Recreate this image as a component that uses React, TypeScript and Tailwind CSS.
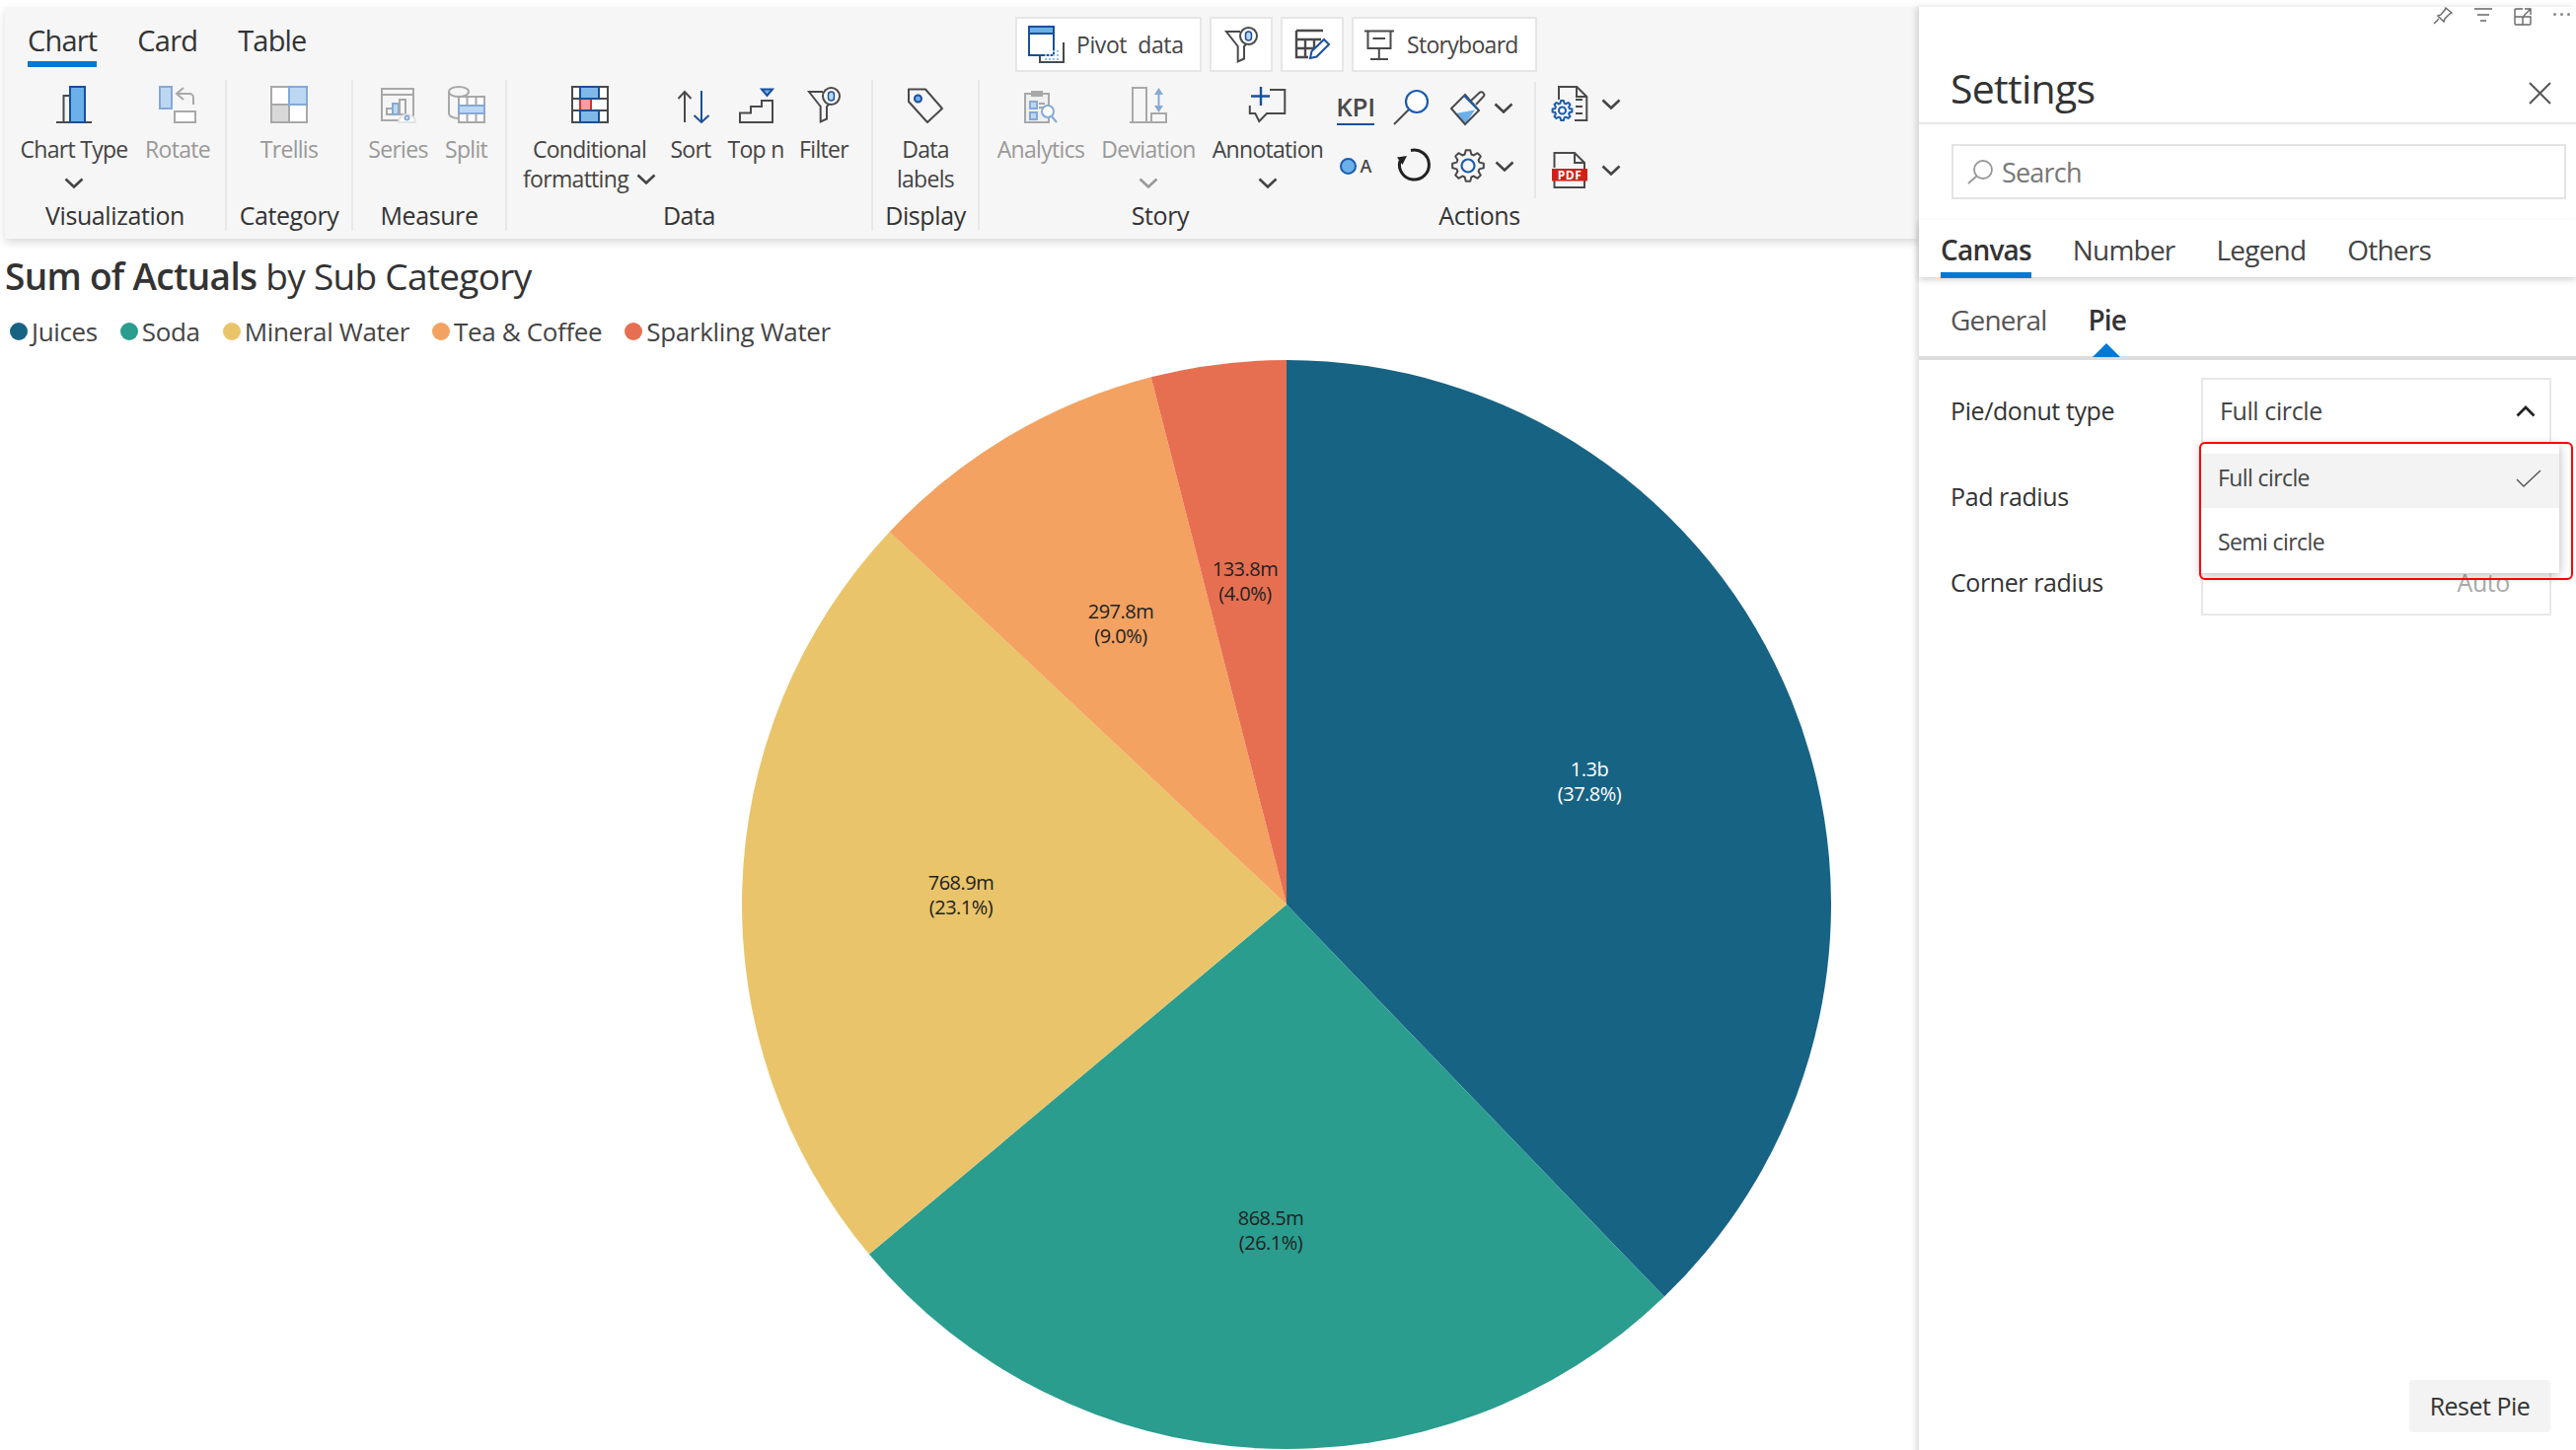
import type { ReactNode } from "react"

const B = "#1a4f9c"
const L = "#6cb0ea"
const G = "#4a4a4a"
const D = "#a8a8a8"
const DB = "#86a9d6"
const DL = "#bbd7f2"

function Ico({ w, h, children }: { w: number; h: number; children: ReactNode }) {
  return (
    <svg width={w} height={h} viewBox={`0 0 ${w} ${h}`} fill="none" strokeWidth="2" className="block shrink-0 overflow-visible">
      {children}
    </svg>
  )
}

function gearPath(cx: number, cy: number, r: number, rIn: number, teeth = 8) {
  const pts: string[] = []
  for (let i = 0; i < teeth; i++) {
    const a = (i / teeth) * Math.PI * 2
    const s = (Math.PI * 2) / teeth
    const add = (ang: number, rad: number) =>
      pts.push(`${(cx + Math.sin(ang) * rad).toFixed(2)} ${(cy - Math.cos(ang) * rad).toFixed(2)}`)
    add(a - s * 0.36, rIn)
    add(a - s * 0.18, r)
    add(a + s * 0.18, r)
    add(a + s * 0.36, rIn)
  }
  return "M" + pts.join("L") + "Z"
}

function Chevron({ color = "#444" }: { color?: string }) {
  return (
    <svg width="20" height="11" viewBox="0 0 20 11" fill="none" className="block shrink-0">
      <path d="M1.5 1.5l8.5 8 8.5-8" stroke={color} strokeWidth="2.6" />
    </svg>
  )
}

const ChartTypeIcon = () => (
  <Ico w={38} h={38}>
    <path d="M1 37H37" stroke={G} />
    <path d="M15 10H8.5V37" stroke={G} />
    <rect x="15" y="1" width="15" height="36" fill={L} stroke={B} />
  </Ico>
)
const RotateIcon = () => (
  <Ico w={38} h={38}>
    <rect x="1" y="1" width="12" height="22" fill={DL} stroke={DB} />
    <path d="M35 19V12a4 4 0 0 0-4-4H19M25 2l-7 6 7 6" stroke={D} />
    <rect x="16" y="26" width="21" height="11" fill="#fff" stroke={D} />
  </Ico>
)
const TrellisIcon = () => (
  <Ico w={38} h={38}>
    <rect x="1" y="1" width="18" height="18" fill="#fff" stroke={D} />
    <rect x="1" y="19" width="18" height="18" fill="#d8d8d8" stroke={D} />
    <rect x="19" y="19" width="18" height="18" fill="#fff" stroke={D} />
    <rect x="19" y="1" width="18" height="18" fill={DL} stroke={DB} />
  </Ico>
)
const SeriesIcon = () => (
  <Ico w={35} h={36}>
    <rect x="1" y="1" width="32" height="32" stroke={D} />
    <path d="M1 7H33" stroke={D} />
    <rect x="6" y="21" width="6" height="6" stroke={D} />
    <rect x="12" y="16" width="6" height="11" fill={DL} stroke={DB} />
    <rect x="19" y="12" width="6" height="15" stroke={D} />
    <path d="M18 35a8.5 8 0 0 1 17 0Z" fill="#fff" stroke="#e4e4e4" />
    <circle cx="26.5" cy="30.5" r="2" fill="#fff" stroke={DB} />
  </Ico>
)
const SplitIcon = () => (
  <Ico w={38} h={38}>
    <ellipse cx="11" cy="6" rx="10" ry="5" stroke={D} />
    <path d="M1 6V28c0 2.5 4 4.5 9 5" stroke={D} />
    <rect x="11" y="11" width="26" height="26" fill="#fff" stroke={D} />
    <rect x="11" y="20" width="26" height="8" fill={DL} stroke={DB} />
    <path d="M19.5 11V20M28.5 11V20M19.5 28V37M28.5 28V37" stroke={D} />
  </Ico>
)
const CondIcon = () => (
  <Ico w={38} h={38}>
    <rect x="1" y="1" width="36" height="36" fill="#fff" stroke={G} />
    <path d="M1 13H37M1 25H37" stroke={G} />
    <rect x="9" y="13" width="11" height="12" fill="#ff9c9c" />
    <path d="M9 13V25M20 13V25" stroke="#d93025" />
    <rect x="9" y="1" width="19" height="12" fill="#7fb9ea" stroke={B} />
    <rect x="9" y="25" width="19" height="12" fill="#7fb9ea" stroke={B} />
  </Ico>
)
const SortIcon = () => (
  <Ico w={34} h={34}>
    <g transform="translate(4 0)">
      <path d="M7 33V2M0.5 9L7 2l6.5 7" stroke={G} />
      <path d="M24 1V33M16.5 26l7.5 7 7.5-7" stroke={B} />
    </g>
  </Ico>
)
const TopNIcon = () => (
  <Ico w={35} h={36}>
    <path d="M1 35V25.5H12V19H23V13H34V35Z" stroke={G} />
    <path d="M23 1.5H34L28.5 8Z" fill={L} stroke={B} />
  </Ico>
)
const FilterIcon = () => (
  <Ico w={33} h={37}>
    <path d="M15 5H1L12.7 20V35.5L19 32.5V20L24 14" stroke={G} />
    <circle cx="23.5" cy="9.5" r="8.5" fill="#fff" stroke={G} />
    <rect x="20.5" y="5" width="6" height="9" rx="3" fill={DL} stroke={B} strokeWidth="1.5" />
  </Ico>
)
const TagIcon = () => (
  <Ico w={36} h={36}>
    <path d="M1 1.5H18L35 21L20 35L1 14Z" stroke={G} strokeLinejoin="round" />
    <circle cx="10.5" cy="11" r="3.5" fill={L} stroke={B} />
  </Ico>
)
const PivotIcon = () => (
  <Ico w={38} h={38}>
    <path d="M12 30V37H36V17" stroke={G} />
    <rect x="1" y="1" width="25" height="29" fill="#fff" stroke={B} />
    <rect x="1" y="1" width="25" height="7" fill={L} stroke={B} />
    {[17, 21, 25, 29].map((x) =>
      [33, 29, 25].map((y) => (y < 27 && x < 25 ? null : <rect key={`${x}-${y}`} x={x} y={y} width="2" height="2" fill="#8ec1ee" />)),
    )}
  </Ico>
)
const EditTableIcon = () => (
  <Ico w={35} h={32}>
    <path d="M1 2H28M1 2V29H13M1 11H26M1 20H20M10 11V29M19 11V22" stroke={G} strokeWidth="2.4" />
    <path d="M15 30l1.5-7L29 11l5 5L21.5 28.5Z" fill="#fff" stroke={B} />
  </Ico>
)
const StoryIcon = () => (
  <Ico w={30} h={31}>
    <path d="M0 1.5H30M3.5 1.5V19H26.5V1.5M8.5 9H21M14.8 19V30M6 30H24" stroke={G} />
  </Ico>
)
const AnalyticsIcon = () => (
  <Ico w={34} h={33}>
    <rect x="1" y="3" width="24" height="29" fill="#efefef" stroke={D} />
    <rect x="7" y="0" width="12" height="6" fill={D} />
    <rect x="6" y="11" width="7" height="7" fill={DL} stroke={DB} />
    <rect x="6" y="22" width="7" height="7" fill={DL} stroke={DB} />
    <path d="M15 13H21M15 17H19" stroke={D} />
    <circle cx="24" cy="21" r="6" fill="#fff" stroke={DB} />
    <path d="M28 26l5 6" stroke={DB} />
  </Ico>
)
const DeviationIcon = () => (
  <Ico w={38} h={37}>
    <path d="M3 36V1H17V36" stroke={D} />
    <rect x="22" y="27" width="15" height="9" stroke={D} />
    <path d="M0 36H38" stroke={D} />
    <path d="M29.5 6V20" stroke={DB} />
    <path d="M29.5 1L25 8H34ZM29.5 26L25 19H34Z" fill={DB} />
  </Ico>
)
const AnnotationIcon = () => (
  <Ico w={38} h={37}>
    <path d="M21 3H36.3V27H18L10.3 35L6.3 27H0.8V19" stroke={G} />
    <path d="M2 9.5H21M12 0V19" stroke={B} strokeWidth="2.4" />
  </Ico>
)
const MagnifierIcon = () => (
  <Ico w={36} h={37}>
    <path d="M16 20L1 35" stroke={G} />
    <circle cx="24" cy="12" r="11" fill="#fff" stroke="#1a5cad" strokeWidth="2.2" />
  </Ico>
)
const BrushIcon = () => (
  <Ico w={36} h={36}>
    <path d="M5.5 24L25 20.5L15 35Z" fill={L} />
    <path d="M1 19L15 35L29 21L15 5Z" stroke={G} fill="none" />
    <path d="M14 6L28 20" stroke="#1a5cad" />
    <path d="M21 11L30 2.5a3 3 0 0 1 4 4L26 15" stroke={G} />
  </Ico>
)
const DotAIcon = () => (
  <div className="flex items-center gap-[4px]">
    <span className="w-[17px] h-[17px] rounded-full bg-[#6cb0ea] border-2 border-[#1a5cad]" />
    <span className="text-[18px] leading-none font-semibold text-[#4a4a4a]">A</span>
  </div>
)
const UndoIcon = () => (
  <Ico w={34} h={34}>
    <path d="M14 1.5A15 15 0 1 1 3 12" stroke="#222" strokeWidth="3" />
    <path d="M0 8.5L10 7L5.5 16Z" fill="#222" />
  </Ico>
)
const GearIcon = () => (
  <Ico w={34} h={34}>
    <path d={gearPath(17, 17, 16, 12)} stroke={G} strokeLinejoin="round" />
    <circle cx="17" cy="17" r="6.5" stroke="#1a5cad" strokeWidth="2.2" />
  </Ico>
)
const DocGearIcon = () => (
  <Ico w={36} h={36}>
    <path d="M7 14V1H25.3L35.3 11V35H23M25 1V11H35M24 14H31M24 21H31M24 28H31" stroke={G} />
    <path d={gearPath(10.5, 25, 10, 7.5)} fill="#f6f6f6" stroke="#1a5cad" strokeLinejoin="round" />
    <circle cx="10.5" cy="25" r="3.5" stroke="#1a5cad" />
  </Ico>
)
const PdfIcon = () => (
  <Ico w={36} h={37}>
    <path d="M2.5 16V1H23L33 11V36H2.5V29M23 1V11H33" stroke={G} />
    <rect x="0" y="17" width="36" height="12.5" fill="#d1201a" />
    <text x="18" y="27.5" textAnchor="middle" fontSize="12" fontWeight="700" fill="#fff" stroke="none" letterSpacing="0.5">
      PDF
    </text>
  </Ico>
)

function Tool({
  icon,
  label,
  width,
  disabled,
  chevron,
}: {
  icon: ReactNode
  label: string
  width: string
  disabled?: boolean
  chevron?: boolean
}) {
  return (
    <div className={`flex flex-col items-center shrink-0 ${width}`}>
      <div className="h-[38px] mt-[6px] flex items-end">{icon}</div>
      <span className={`mt-[11px] text-[23px] tracking-[-0.7px] leading-[30px] whitespace-nowrap ${disabled ? "text-[#999]" : "text-[#444]"}`}>
        {label}
      </span>
      {chevron && (
        <div className="h-[30px] mt-[4px] flex items-center">
          <Chevron color={disabled ? "#999" : "#444"} />
        </div>
      )}
    </div>
  )
}

function Group({
  label,
  width,
  children,
  border = true,
}: {
  label: string
  width: string
  children: ReactNode
  border?: boolean
}) {
  return (
    <div className={`flex flex-col h-[153px] shrink-0 ${width} ${border ? "border-r-2 border-[#e8e8e8]" : ""}`}>
      <div className="h-[122px] flex justify-center">{children}</div>
      <div className="h-[30px] text-center text-[25px] tracking-[-0.4px] leading-[30px] text-[#333]">{label}</div>
    </div>
  )
}

function Ribbon() {
  return (
    <div className="ml-[5px] mt-[7px] h-[235px] bg-[#f6f6f6] shadow-[0_4px_8px_rgba(0,0,0,0.14)] relative z-[1]">
      <div className="h-[74px] flex pl-[23px]">
        <div className="flex gap-[41px] text-[29px] tracking-[-0.8px] text-[#333]">
          <div className="flex flex-col pt-[14px]">
            <span className="leading-[40px]">Chart</span>
            <span className="h-[6px] mt-[1px] bg-[#0078d4]" />
          </div>
          <span className="pt-[14px] leading-[40px]">Card</span>
          <span className="pt-[14px] leading-[40px]">Table</span>
        </div>
        <div className="ml-auto mr-[387px] pt-[10px] flex gap-[8px] h-[66px] text-[23px] text-[#444]">
          <div className="w-[189px] border-2 border-[#e6e6e6] bg-white flex items-center pl-[11px] gap-[11px]">
            <PivotIcon />
            <span className="tracking-[-0.4px] whitespace-pre">Pivot  data</span>
          </div>
          <div className="w-[64px] border-2 border-[#e6e6e6] bg-white flex items-center justify-center">
            <FilterIcon />
          </div>
          <div className="w-[64px] border-2 border-[#e6e6e6] bg-white flex items-center justify-center">
            <EditTableIcon />
          </div>
          <div className="w-[188px] border-2 border-[#e6e6e6] bg-white flex items-center pl-[11px] gap-[13px]">
            <StoryIcon />
            <span className="tracking-[-0.7px]">Storyboard</span>
          </div>
        </div>
      </div>
      <div className="flex">
        <Group label="Visualization" width="w-[225px]">
          <div className="flex w-full pl-[10px]">
            <Tool icon={<ChartTypeIcon />} label="Chart Type" width="w-[120px]" chevron />
            <Tool icon={<RotateIcon />} label="Rotate" width="w-[90px]" disabled />
          </div>
        </Group>
        <Group label="Category" width="w-[128px]">
          <Tool icon={<TrellisIcon />} label="Trellis" width="w-[80px]" disabled />
        </Group>
        <Group label="Measure" width="w-[156px]">
          <div className="flex pl-[6px]">
            <Tool icon={<SeriesIcon />} label="Series" width="w-[69px]" disabled />
            <Tool icon={<SplitIcon />} label="Split" width="w-[69px]" disabled />
          </div>
        </Group>
        <Group label="Data" width="w-[371px]">
          <div className="flex w-full">
            <div className="w-[167px] flex flex-col items-center shrink-0">
              <div className="h-[38px] mt-[6px] flex items-end">
                <CondIcon />
              </div>
              <span className="mt-[11px] text-[23px] tracking-[-0.7px] leading-[30px] text-[#444]">Conditional</span>
              <div className="flex items-center gap-[8px] text-[23px] tracking-[-0.7px] leading-[30px] text-[#444]">
                formatting
                <Chevron />
              </div>
            </div>
            <Tool icon={<SortIcon />} label="Sort" width="w-[38px]" />
            <Tool icon={<TopNIcon />} label="Top n" width="w-[94px]" />
            <Tool icon={<FilterIcon />} label="Filter" width="w-[44px]" />
          </div>
        </Group>
        <Group label="Display" width="w-[108px]">
          <div className="flex flex-col items-center">
            <Tool icon={<TagIcon />} label="Data" width="w-[80px]" />
            <span className="text-[23px] tracking-[-0.7px] leading-[30px] text-[#444]">labels</span>
          </div>
        </Group>
        <Group label="Story" width="w-[366px]" border={false}>
          <div className="flex w-full">
            <Tool icon={<AnalyticsIcon />} label="Analytics" width="w-[124px]" disabled />
            <Tool icon={<DeviationIcon />} label="Deviation" width="w-[94px]" disabled chevron />
            <Tool icon={<AnnotationIcon />} label="Annotation" width="w-[148px]" chevron />
          </div>
        </Group>
        <Group label="Actions" width="w-[281px]" border={false}>
          <div className="flex w-full -ml-[10px] shrink-0">
            <div className="w-[203px] my-[2px] border-r-2 border-[#e8e8e8] shrink-0 h-[118px]">
              <div className="flex h-[52px] items-center">
                <div className="w-[40px] flex flex-col items-center pt-[2px]">
                  <span className="text-[26px] leading-[30px] font-semibold tracking-[-0.3px] text-[#4a4a4a]">KPI</span>
                  <span className="w-[38px] h-[2px] bg-[#1a4f9c] mt-[2px]" />
                </div>
                <div className="w-[76px] flex justify-center pr-[4px]">
                  <MagnifierIcon />
                </div>
                <div className="flex items-center gap-[8px]">
                  <BrushIcon />
                  <Chevron />
                </div>
              </div>
              <div className="flex h-[66px] items-center">
                <div className="w-[40px] flex justify-center">
                  <DotAIcon />
                </div>
                <div className="w-[77px] flex justify-center">
                  <UndoIcon />
                </div>
                <div className="flex items-center gap-[10px]">
                  <GearIcon />
                  <Chevron />
                </div>
              </div>
            </div>
            <div className="pl-[16px] pt-[6px] flex flex-col gap-[31px]">
              <div className="flex items-center gap-[14px]">
                <DocGearIcon />
                <Chevron />
              </div>
              <div className="flex items-center gap-[14px]">
                <PdfIcon />
                <Chevron />
              </div>
            </div>
          </div>
        </Group>
      </div>
    </div>
  )
}

const slices = [
  { name: "Juices", pct: 37.8, color: "#176384" },
  { name: "Soda", pct: 26.1, color: "#2a9d8f" },
  { name: "Mineral Water", pct: 23.1, color: "#e9c46a" },
  { name: "Tea & Coffee", pct: 9.0, color: "#f4a261" },
  { name: "Sparkling Water", pct: 4.0, color: "#e76f51" },
]

const pieLabels = [
  { x: 859, y: 415, a: "1.3b", b: "(37.8%)", fill: "#fff" },
  { x: 536, y: 870, a: "868.5m", b: "(26.1%)", fill: "#222" },
  { x: 222, y: 530, a: "768.9m", b: "(23.1%)", fill: "#222" },
  { x: 384, y: 255, a: "297.8m", b: "(9.0%)", fill: "#222" },
  { x: 510, y: 212, a: "133.8m", b: "(4.0%)", fill: "#222" },
]

function Pie() {
  const R = 552
  let acc = 0
  const paths = slices.map((s) => {
    const a0 = (acc / 100) * Math.PI * 2
    acc += s.pct
    const a1 = (acc / 100) * Math.PI * 2
    const p = (a: number) => `${(R + Math.sin(a) * R).toFixed(2)} ${(R - Math.cos(a) * R).toFixed(2)}`
    return <path key={s.name} d={`M${R} ${R}L${p(a0)}A${R} ${R} 0 ${s.pct > 50 ? 1 : 0} 1 ${p(a1)}Z`} fill={s.color} />
  })
  return (
    <svg width="1104" height="1104" viewBox="0 0 1104 1104" className="block ml-[752px] mt-[13px] shrink-0">
      {paths}
      {pieLabels.map((l) => (
        <text key={l.a} textAnchor="middle" fontSize="20" letterSpacing="-0.5" fill={l.fill}>
          <tspan x={l.x} y={l.y + 7}>
            {l.a}
          </tspan>
          <tspan x={l.x} y={l.y + 32}>
            {l.b}
          </tspan>
        </text>
      ))}
    </svg>
  )
}

function ChartArea() {
  return (
    <div className="w-[1945px] h-[1470px] shrink-0 flex flex-col overflow-hidden">
      <Ribbon />
      <h1 className="mt-[16px] pl-[5px] h-[44px] text-[37px] leading-[44px] tracking-[-0.7px] text-[#333]">
        <span className="font-semibold">Sum of Actuals</span> by Sub Category
      </h1>
      <div className="mt-[19px] mb-[1px] pl-[10px] flex gap-[23px] h-[30px] items-center text-[26px] tracking-[-0.35px] text-[#444]">
        {slices.map((s) => (
          <div key={s.name} className="flex items-center gap-[4px]">
            <span className="w-[18px] h-[18px] rounded-full" style={{ backgroundColor: s.color }} />
            <span>{s.name}</span>
          </div>
        ))}
      </div>
      <Pie />
    </div>
  )
}

function SettingsPanel() {
  return (
    <div className="flex-1 h-[1470px] flex flex-col relative z-10 bg-white shadow-[-3px_0_6px_rgba(0,0,0,0.14)] mt-[7px] text-[#333]">
      <div className="h-[55px] flex justify-end items-start gap-[22px] pr-[6px] text-[#666]">
        <svg width="20" height="18" viewBox="0 0 20 18" fill="none" stroke="#666" strokeWidth="1.4" className="mt-[0px]">
          <path d="M13 1l6 5-2 1-5 5-1 3-6-6 3-1 4-5ZM6 12l-5 5" />
        </svg>
        <svg width="18" height="14" viewBox="0 0 18 14" fill="none" stroke="#666" strokeWidth="1.6" className="mt-[1px]">
          <path d="M0 1H18M3 7H15M6 13H12" />
        </svg>
        <svg width="18" height="18" viewBox="0 0 18 18" fill="none" stroke="#666" strokeWidth="1.4" className="mt-[1px]">
          <path d="M9 1H2a1 1 0 0 0-1 1v14a1 1 0 0 0 1 1h14a1 1 0 0 0 1-1V9H9v8M1 9H9M11 1h6v6M17 1L10 8" />
        </svg>
        <div className="flex gap-[4px] mt-[6px]">
          <span className="w-[3px] h-[3px] rounded-full bg-[#888]" />
          <span className="w-[3px] h-[3px] rounded-full bg-[#888]" />
          <span className="w-[3px] h-[3px] rounded-full bg-[#888]" />
        </div>
      </div>
      <div className="h-[64px] border-b-2 border-[#e8e8e8] flex items-start justify-between pl-[32px] pr-[25px]">
        <span className="text-[41px] leading-[54px] tracking-[-0.7px] text-[#333]">Settings</span>
        <svg width="23" height="23" viewBox="0 0 23 23" fill="none" stroke="#555" strokeWidth="2" className="mt-[21px]">
          <path d="M1 1L22 22M22 1L1 22" />
        </svg>
      </div>
      <div className="mt-[20px] ml-[33px] w-[623px] h-[56px] shrink-0 border-2 border-[#e4e4e4] flex items-center pl-[14px] gap-[9px]">
        <svg width="26" height="25" viewBox="0 0 26 25" fill="none" stroke="#999" strokeWidth="1.8">
          <circle cx="16" cy="10" r="9" />
          <path d="M9.5 16.5L1 24" />
        </svg>
        <span className="text-[27px] tracking-[-0.8px] text-[#777] pt-[2px]">Search</span>
      </div>
      <div className="mt-[21px] h-[58px] shrink-0 flex items-center gap-[42px] pl-[22px] pt-[2px] text-[28px] tracking-[-0.8px] shadow-[0_3px_6px_rgba(0,0,0,0.16)] text-[#444]">
        <div className="relative font-semibold text-[#333]">
          Canvas
          <span className="absolute left-0 right-0 top-[44px] h-[6px] bg-[#0078d4]" />
        </div>
        <span>Number</span>
        <span>Legend</span>
        <span>Others</span>
      </div>
      <div className="h-[84px] shrink-0 border-b-4 border-[#ddd] flex gap-[42px] pl-[32px] pt-[23px] text-[28px] tracking-[-0.8px] text-[#555]">
        <span className="leading-[40px]">General</span>
        <div className="relative leading-[40px] font-semibold text-[#333]">
          Pie
          <span className="absolute left-[5px] top-[44px] w-0 h-0 border-x-[14px] border-x-transparent border-b-[14px] border-b-[#0078d4]" />
        </div>
      </div>
      <div className="mt-[18px] pl-[32px] flex flex-col gap-[20px] text-[25px] tracking-[-0.4px]">
        <div className="flex h-[67px]">
          <span className="w-[254px] self-center font-medium text-[#333]">Pie/donut type</span>
          <div className="relative w-[355px] border-2 border-[#e8e8e8] flex items-center justify-between pl-[17px] pr-[14px] text-[#444]">
            Full circle
            <svg width="20" height="12" viewBox="0 0 20 12" fill="none" stroke="#222" strokeWidth="2.8">
              <path d="M1.5 10.5L10 2l8.5 8.5" />
            </svg>
            <div className="absolute -left-[2px] top-[65px] w-[363px] h-[131px] bg-white shadow-[0_2px_10px_rgba(0,0,0,0.28)] z-10 pt-[10px] text-[23px] tracking-[-0.6px]">
              <div className="h-[55px] bg-[#f3f3f3] flex items-center justify-between pl-[17px] pr-[18px] pb-[6px]">
                Full circle
                <svg width="26" height="18" viewBox="0 0 26 18" fill="none" stroke="#555" strokeWidth="1.4">
                  <path d="M1 10l7 7L25 1" />
                </svg>
              </div>
              <div className="h-[55px] flex items-center pl-[17px] pt-[14px]">Semi circle</div>
            </div>
            <div className="absolute -left-[4px] top-[63px] w-[379px] h-[140px] border-2 border-[#f00] rounded-[6px] z-20" />
          </div>
        </div>
        <div className="flex h-[67px]">
          <span className="w-[254px] self-center font-medium text-[#333]">Pad radius</span>
          <div className="w-[355px] border-2 border-[#e8e8e8]" />
        </div>
        <div className="flex h-[67px]">
          <span className="w-[254px] self-center font-medium text-[#333]">Corner radius</span>
          <div className="w-[355px] border-2 border-[#e8e8e8] flex items-center justify-end pr-[40px] text-[#aaa]">Auto</div>
        </div>
      </div>
      <div className="mt-auto mb-[25px] self-end mr-[26px] w-[143px] h-[53px] rounded-[4px] bg-[#f3f3f3] flex items-center justify-center text-[25px] tracking-[-0.5px] text-[#333]">
        Reset Pie
      </div>
    </div>
  )
}

export default function App() {
  return (
    <div className="w-[2611px] h-[1470px] flex overflow-hidden bg-white font-['Open_Sans',sans-serif]">
      <ChartArea />
      <SettingsPanel />
    </div>
  )
}
